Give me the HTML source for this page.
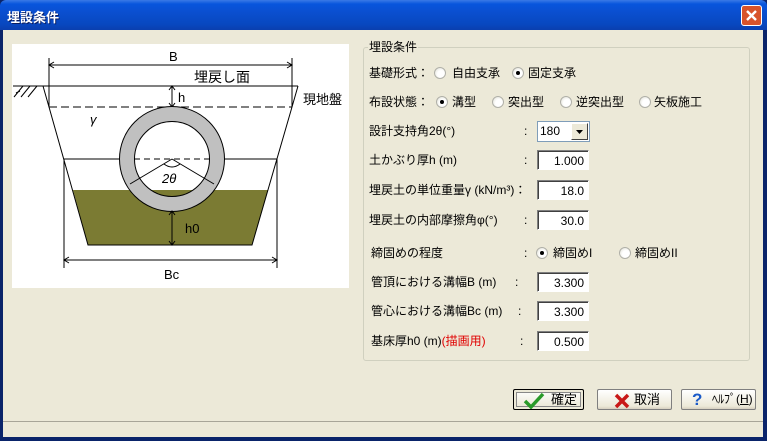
<!DOCTYPE html>
<html><head><meta charset="utf-8">
<style>
*{margin:0;padding:0;box-sizing:border-box}
body{width:767px;height:441px;overflow:hidden;background:#0a246a;font-family:"Liberation Sans","Noto Sans CJK JP",sans-serif;font-size:12px;color:#000;position:relative}
#title{position:absolute;left:0;top:0;width:767px;height:30px;background:linear-gradient(#3a7ae6 0,#0855dd 4px,#0a4fd0 12px,#0848c0 24px,#0a3fae 30px);border-radius:6px 6px 0 0}
#title span{position:absolute;left:7px;top:7px;color:#fff;font-weight:bold;font-size:13px;text-shadow:1px 1px #0a1e60}
#close{position:absolute;left:741px;top:5px;width:21px;height:21px;background:#d8532a;border:1px solid #fff;border-radius:3px}
#body{position:absolute;left:3px;top:30px;width:760px;height:407px;background:#ece9d8}
.a{position:absolute;white-space:nowrap}
.l{position:absolute;white-space:nowrap;line-height:14px}
.inp{position:absolute;width:52px;height:20px;background:#fff;border:1px solid;border-color:#7f7f7f #fff #fff #7f7f7f;box-shadow:inset 1px 1px #404040;text-align:right;padding:3px 4px 0 0;font-size:12px}
.r{position:absolute;width:12px;height:12px;border-radius:50%;background:radial-gradient(circle at 60% 60%,#fff 40%,#dcdcd0 100%);border:1px solid #b0b0a8}
.r.on::after{content:"";position:absolute;left:3px;top:3px;width:4px;height:4px;border-radius:50%;background:#000}
.btn{position:absolute;height:21px;width:75px;background:linear-gradient(#fff,#ece9d8 85%,#d6d0c0);border:1px solid #7f7f7f;border-radius:2px;text-align:center;line-height:19px;font-size:13px}
</style></head><body>
<div id="title"><span>埋設条件</span>
<div id="close"><svg width="19" height="19"><path d="M5 5L14 14M14 5L5 14" stroke="#fff" stroke-width="2.4"/></svg></div></div>
<div id="body"></div>
<div class="a" style="left:3px;top:421px;width:760px;height:1px;background:#a8a598"></div>

<svg class="a" style="left:0;top:0" width="360" height="300">
<rect x="12" y="44" width="337" height="244" fill="#fff"/>
<polygon points="73,190 268,190 252,245 88,245" fill="#7b7b33"/>
<g stroke="#000" stroke-width="1" fill="none">
<line x1="13" y1="86" x2="298" y2="86"/>
<path d="M14,97 L23,86 M21,97 L30,86 M28,97 L37,86 M16,93 L20,91"/>
<polyline points="43,86 49,107 88,245 252,245 292,107 298,86"/>
<line x1="49" y1="58" x2="49" y2="107"/><line x1="292" y1="58" x2="292" y2="107"/>
<line x1="49" y1="65" x2="292" y2="65"/>
<path d="M54,62 L49,65 L54,68 M287,62 L292,65 L287,68"/>
<line x1="49" y1="107" x2="292" y2="107" stroke-dasharray="8,4"/>
<line x1="172" y1="86" x2="172" y2="107"/><path d="M169,90 L172,86 L175,90 M169,103 L172,107 L175,103"/>
<line x1="64" y1="159" x2="120" y2="159"/><line x1="224" y1="159" x2="277" y2="159"/>
<line x1="64" y1="159" x2="64" y2="268"/><line x1="277" y1="159" x2="277" y2="268"/>
<line x1="64" y1="260" x2="277" y2="260"/>
<path d="M69,257 L64,260 L69,263 M272,257 L277,260 L272,263"/>
</g>
<circle cx="172" cy="159" r="45" fill="none" stroke="#c0c0c0" stroke-width="15"/>
<circle cx="172" cy="159" r="52.5" fill="none" stroke="#000"/>
<circle cx="172" cy="159" r="37.5" fill="none" stroke="#000"/>
<g stroke="#000" fill="none">
<line x1="134" y1="159" x2="210" y2="159" stroke-dasharray="6,4"/>
<path d="M172,159 L130,184 M172,159 L214,184 M164,164 Q172,170 180,164"/>
<line x1="172" y1="211" x2="172" y2="245"/><path d="M169,215 L172,211 L175,215 M169,241 L172,245 L175,241"/>
</g>
<g font-size="13" font-family="Liberation Sans,Noto Sans CJK JP,sans-serif">
<text x="169" y="61">B</text>
<text x="194" y="82" font-size="14">埋戻し面</text>
<text x="178" y="102">h</text>
<text x="303" y="104" font-size="13">現地盤</text>
<text x="90" y="124" font-style="italic">γ</text>
<text x="162" y="183" font-style="italic">2θ</text>
<text x="185" y="233">h0</text>
<text x="164" y="279">Bc</text>
</g>
</svg>

<div class="a" style="left:363px;top:47px;width:387px;height:314px;border:1px solid #d0d0bf;border-radius:3px"></div>
<div class="l" style="left:368px;top:40px;background:#ece9d8;padding:0 1px">埋設条件</div>

<div class="l" style="left:369px;top:66px">基礎形式：</div>
<div class="r" style="left:434px;top:67px"></div><div class="l" style="left:452px;top:66px">自由支承</div>
<div class="r on" style="left:512px;top:67px"></div><div class="l" style="left:528px;top:66px">固定支承</div>

<div class="l" style="left:369px;top:95px">布設状態：</div>
<div class="r on" style="left:436px;top:96px"></div><div class="l" style="left:452px;top:95px">溝型</div>
<div class="r" style="left:492px;top:96px"></div><div class="l" style="left:508px;top:95px">突出型</div>
<div class="r" style="left:560px;top:96px"></div><div class="l" style="left:576px;top:95px">逆突出型</div>
<div class="r" style="left:639px;top:96px"></div><div class="l" style="left:654px;top:95px">矢板施工</div>

<div class="l" style="left:369px;top:124px">設計支持角2θ(°)</div><div class="l" style="left:524px;top:124px">:</div>
<div class="a" style="left:537px;top:121px;width:53px;height:21px;background:#fff;border:1px solid #7f9db9"></div>
<div class="l" style="left:540px;top:124px">180</div>
<div class="a" style="left:571px;top:123px;width:17px;height:17px;background:#ece9d8;border:1px solid;border-color:#fff #404040 #404040 #fff"><svg width="15" height="15"><path d="M4,6 L11,6 L7.5,10Z" fill="#000"/></svg></div>

<div class="l" style="left:369px;top:153px">土かぶり厚h (m)</div><div class="l" style="left:524px;top:153px">:</div>
<div class="inp" style="left:537px;top:150px">1.000</div>
<div class="l" style="left:369px;top:183px">埋戻土の単位重量γ (kN/m³)：</div>
<div class="inp" style="left:537px;top:180px">18.0</div>
<div class="l" style="left:369px;top:213px">埋戻土の内部摩擦角φ(°)</div><div class="l" style="left:524px;top:213px">:</div>
<div class="inp" style="left:537px;top:210px">30.0</div>

<div class="l" style="left:371px;top:246px">締固めの程度</div><div class="l" style="left:524px;top:246px">:</div>
<div class="r on" style="left:536px;top:247px"></div><div class="l" style="left:553px;top:246px">締固めI</div>
<div class="r" style="left:619px;top:247px"></div><div class="l" style="left:635px;top:246px">締固めII</div>

<div class="l" style="left:371px;top:275px">管頂における溝幅B (m)</div><div class="l" style="left:515px;top:275px">:</div>
<div class="inp" style="left:537px;top:272px">3.300</div>
<div class="l" style="left:371px;top:304px">管心における溝幅Bc (m)</div><div class="l" style="left:518px;top:304px">:</div>
<div class="inp" style="left:537px;top:301px">3.300</div>
<div class="l" style="left:371px;top:334px">基床厚h0 (m)<span style="color:#e00000">(描画用)</span></div><div class="l" style="left:520px;top:334px">:</div>
<div class="inp" style="left:537px;top:331px">0.500</div>

<div class="btn" style="left:513px;top:389px;width:71px;border:1px solid #000;box-shadow:inset 0 0 0 2px #ece9d8,inset 0 0 0 3px #888"><svg style="position:absolute;left:9px;top:2px" width="22" height="17"><path d="M2,9 L8,15 L20,2" stroke="#2a9a2a" stroke-width="3.5" fill="none"/></svg><span style="position:absolute;left:37px;top:0">確定</span></div>
<div class="btn" style="left:597px;top:389px"><svg style="position:absolute;left:16px;top:3px" width="16" height="16"><path d="M2,2 L14,14 M14,2 L2,14" stroke="#c81818" stroke-width="3.5"/></svg><span style="position:absolute;left:36px;top:0">取消</span></div>
<div class="btn" style="left:681px;top:389px"><span style="position:absolute;left:10px;top:0;color:#1a5ac8;font-weight:bold;font-size:17px">?</span><span style="position:absolute;left:30px;top:0;font-size:12px">ﾍﾙﾌﾟ(<u>H</u>)</span></div>
</body></html>
